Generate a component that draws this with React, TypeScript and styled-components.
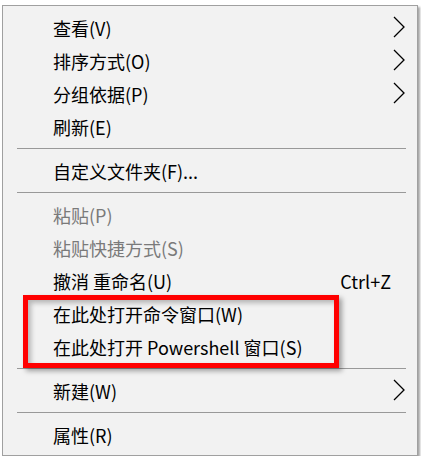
import React from 'react';
import styled, { createGlobalStyle } from 'styled-components';

const GlobalStyle = createGlobalStyle`
  html, body {
    margin: 0;
    padding: 0;
    background: #ffffff;
  }
`;

// 바탕 화면 우클릭 메뉴 틀
const Page = styled.div`
  padding: 5px 0 0 2px;
`;

const Menu = styled.div`
  width: 414px;
  box-sizing: content-box;
  padding: 5px 0 4px;
  background-color: #f2f2f2;
  border: 1px solid #a0a0a0;
  box-shadow: 2px 2px 2px rgba(0, 0, 0, 0.35);
  font-family: 'Noto Sans CJK SC', 'Noto Sans', sans-serif;
  font-size: 18px;
  color: #000;
`;

const Row = styled.div<{ $disabled?: boolean }>`
  height: 33px;
  display: flex;
  align-items: center;
  padding: 0 12px 0 50px;
  color: ${({ $disabled }) => ($disabled ? '#7a7a7a' : '#000')};
  cursor: default;
`;

const Label = styled.span`
  flex: 1;
  white-space: nowrap;
`;

const Shortcut = styled.span`
  margin-right: 14px;
  white-space: nowrap;
`;

const Arrow = styled.svg`
  width: 12px;
  height: 22px;
  margin-top: -2px;
`;

const Separator = styled.div`
  height: 11px;
  display: flex;
  align-items: center;
  padding: 0 11px 0 14px;

  &::before {
    content: '';
    flex: 1;
    height: 1px;
    background-color: #999999;
  }
`;

// 빨간 강조 테두리 (두 항목 위에 겹침)
const Highlight = styled.div`
  position: relative;

  &::after {
    content: '';
    position: absolute;
    left: 20px;
    width: 316px;
    top: -2px;
    bottom: -5px;
    box-sizing: border-box;
    border: 5px solid #ff0000;
    box-shadow: 3px 3px 5px rgba(0, 0, 0, 0.35),
      inset 3px 3px 5px rgba(0, 0, 0, 0.25);
    pointer-events: none;
  }
`;

const SubArrow = () => (
  <Arrow viewBox="0 0 12 22">
    <polyline points="1,1 11,11 1,21" fill="none" stroke="#000" strokeWidth="1.3" />
  </Arrow>
);

type Item = { label: string; sub?: boolean; disabled?: boolean; shortcut?: string };

const Item = ({ label, sub, disabled, shortcut }: Item) => (
  <Row $disabled={disabled}>
    <Label>{label}</Label>
    {shortcut && <Shortcut>{shortcut}</Shortcut>}
    {sub && <SubArrow />}
  </Row>
);

export default function App() {
  return (
    <Page>
      <GlobalStyle />
      <Menu>
        <Item label="查看(V)" sub />
        <Item label="排序方式(O)" sub />
        <Item label="分组依据(P)" sub />
        <Item label="刷新(E)" />
        <Separator />
        <Item label="自定义文件夹(F)..." />
        <Separator />
        <Item label="粘贴(P)" disabled />
        <Item label="粘贴快捷方式(S)" disabled />
        <Item label="撤消 重命名(U)" shortcut="Ctrl+Z" />
        <Highlight>
          <Item label="在此处打开命令窗口(W)" />
          <Item label="在此处打开 Powershell 窗口(S)" />
        </Highlight>
        <Separator />
        <Item label="新建(W)" sub />
        <Separator />
        <Item label="属性(R)" />
      </Menu>
    </Page>
  );
}
